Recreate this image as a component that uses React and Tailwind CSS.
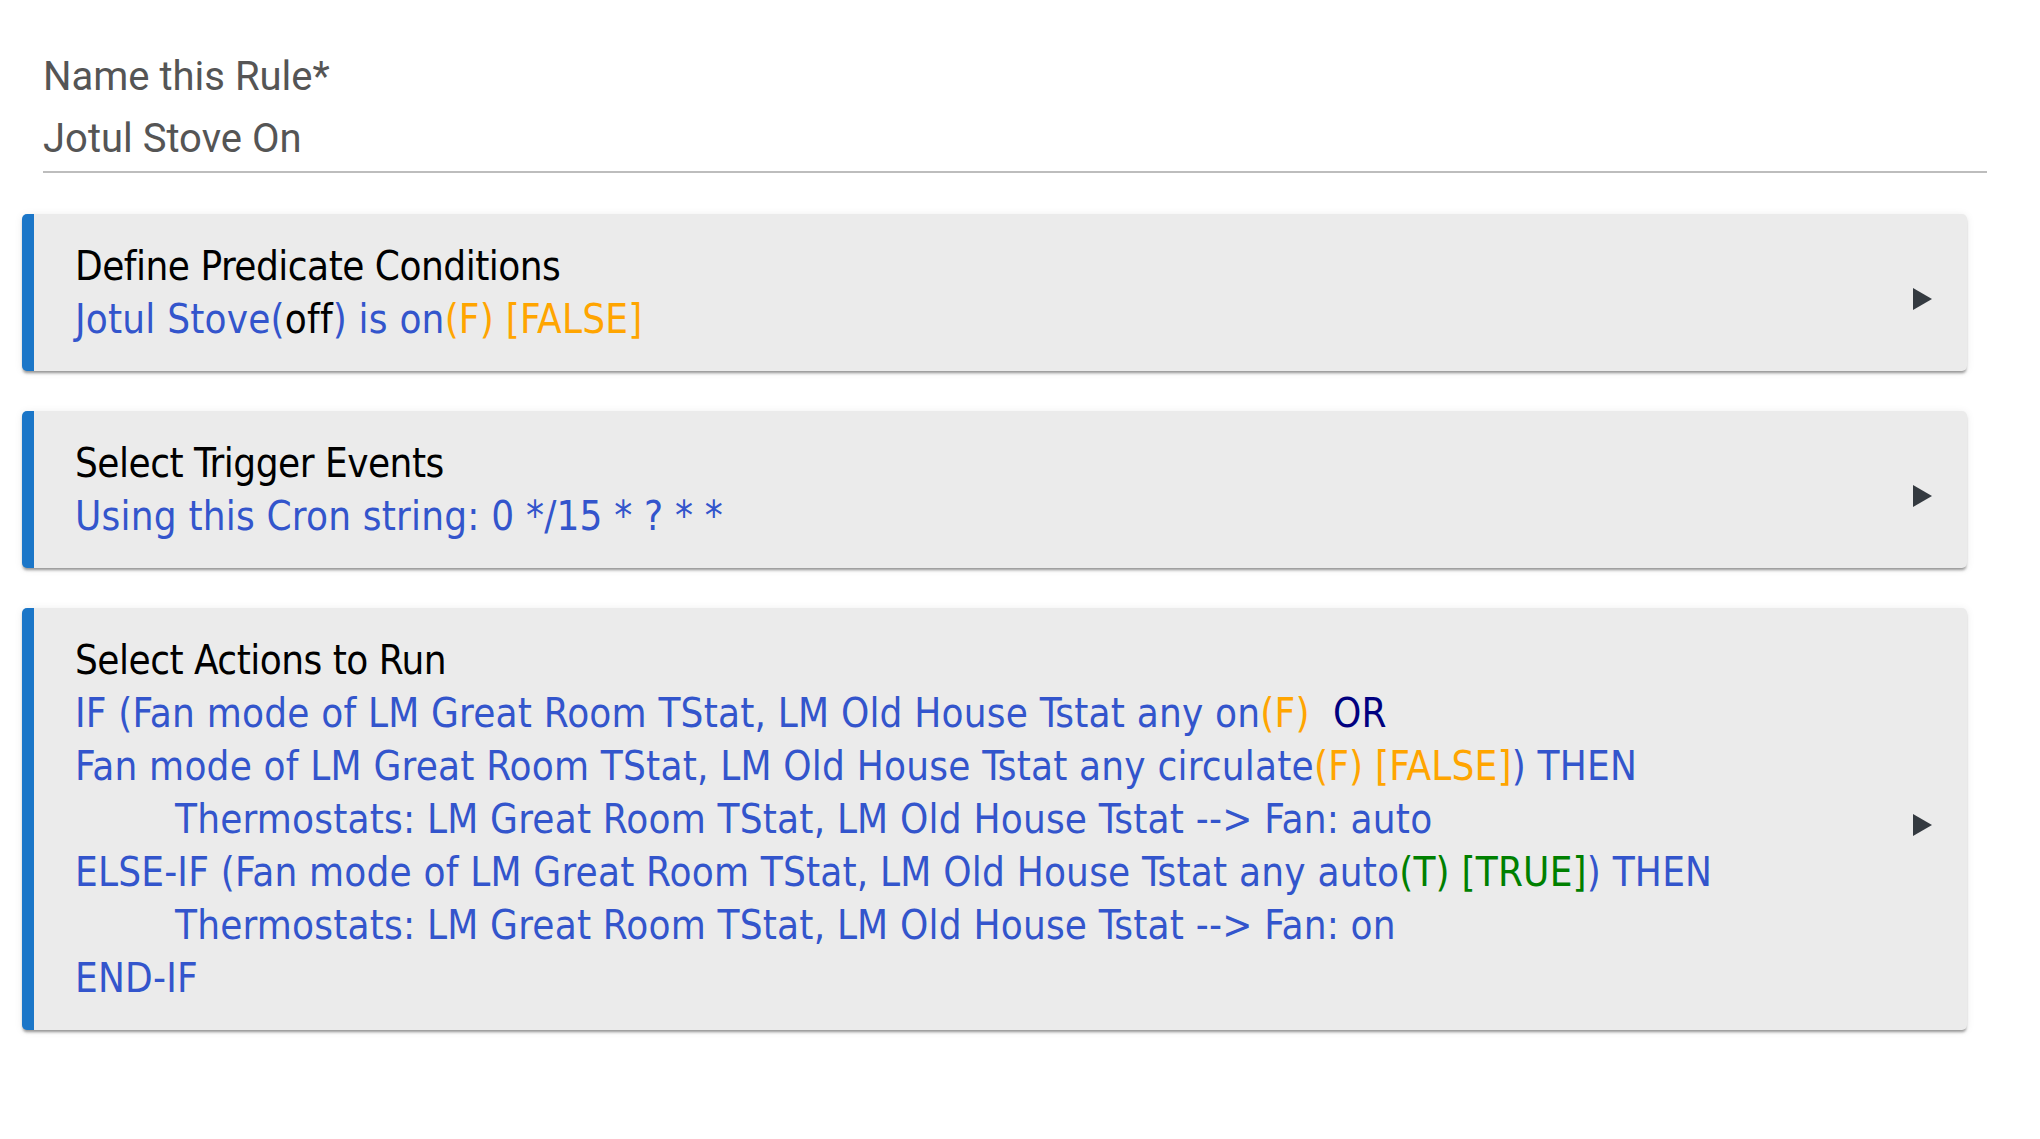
import React from "react";

const card = "flex items-center rounded-[5px] border-l-[12px] border-[#1b76c8] bg-[#ebebeb] pl-[41px] pr-[35px] pt-[26px] pb-[25px] shadow-[0_3px_3px_-1px_rgba(0,0,0,0.4),0_1px_8px_rgba(0,0,0,0.08)]";
const blue = "text-[#3355cc] tracking-[0.2px]";
const orange = "text-[#ffa500]";
const green = "text-[#008000]";

function Arrow() {
  return (
    <svg width="19" height="22" viewBox="0 0 19 22" className="mt-[11px] shrink-0">
      <path d="M0 0 L19 11 L0 22 Z" fill="#343a40" />
    </svg>
  );
}

function Card({ title, children }) {
  return (
    <div className={card}>
      <div className="flex-1 text-[40px] leading-[53px] whitespace-pre" style={{ fontFamily: "'DejaVu Sans Condensed', 'DejaVu Sans', sans-serif", fontStretch: "condensed" }}>
        <div className="text-black tracking-[-0.5px]">{title}</div>
        {children}
      </div>
      <Arrow />
    </div>
  );
}

export default function App() {
  return (
    <div className="min-h-screen bg-white pt-[53px]">
      <div className="ml-[43px] mr-[53px] border-b-2 border-[#bdbdbd] pb-[9px]" style={{ fontFamily: "Roboto, sans-serif" }}>
        <div className="text-[40px] leading-[47px] text-[#555555]">Name this Rule*</div>
        <div className="text-[40px] leading-[47px] text-[#555555] mt-[15px]">Jotul Stove On</div>
      </div>

      <div className="ml-[22px] mr-[73px] mt-[41px] flex flex-col gap-[40px]">
        <Card title="Define Predicate Conditions">
          <div className={blue}>
            Jotul Stove(<span className="text-black">off</span>) is on<span className={orange}>(F) [FALSE]</span>
          </div>
        </Card>

        <Card title="Select Trigger Events">
          <div className={blue}>Using this Cron string: 0 */15 * ? * *</div>
        </Card>

        <Card title="Select Actions to Run">
          <div className={blue}>
            IF (Fan mode of LM Great Room TStat, LM Old House Tstat any on<span className={orange}>(F)</span>{"  "}<span className="text-[#000080]">OR</span>
          </div>
          <div className={blue}>
            Fan mode of LM Great Room TStat, LM Old House Tstat any circulate<span className={orange}>(F) [FALSE]</span>) THEN
          </div>
          <div className={`${blue} pl-[100px]`}>Thermostats: LM Great Room TStat, LM Old House Tstat --&gt; Fan: auto</div>
          <div className={blue}>
            ELSE-IF (Fan mode of LM Great Room TStat, LM Old House Tstat any auto<span className={green}>(T) [TRUE]</span>) THEN
          </div>
          <div className={`${blue} pl-[100px]`}>Thermostats: LM Great Room TStat, LM Old House Tstat --&gt; Fan: on</div>
          <div className={blue}>END-IF</div>
        </Card>
      </div>
    </div>
  );
}
